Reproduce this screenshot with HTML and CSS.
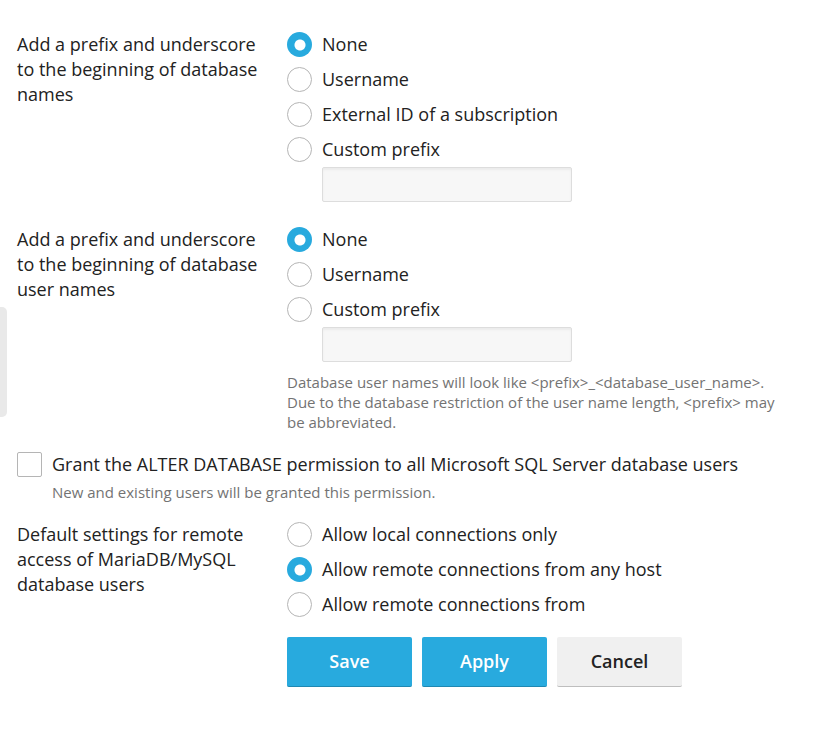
FILE: index.html
```html
<!DOCTYPE html>
<html lang="en">
<head>
<meta charset="utf-8">
<meta name="viewport" content="width=device-width, initial-scale=1">
<title>Database settings</title>
<link rel="stylesheet" href="styles.css">
</head>
<body>
<div class="side-handle"></div>
<form class="form">
  <div class="row" role="radiogroup" aria-labelledby="db-label">
    <div class="row-label" id="db-label">Add a prefix and underscore to the beginning of database names</div>
    <div class="row-field">
      <label class="option"><input type="radio" name="db" checked>None</label>
      <label class="option"><input type="radio" name="db">Username</label>
      <label class="option"><input type="radio" name="db">External ID of a subscription</label>
      <label class="option"><input type="radio" name="db"><span id="db-custom-text">Custom prefix</span></label>
      <input class="text" type="text" aria-labelledby="db-custom-text" disabled>
    </div>
  </div>
  <div class="row" role="radiogroup" aria-labelledby="user-label">
    <div class="row-label" id="user-label">Add a prefix and underscore to the beginning of database user names</div>
    <div class="row-field">
      <label class="option"><input type="radio" name="user" checked>None</label>
      <label class="option"><input type="radio" name="user">Username</label>
      <label class="option"><input type="radio" name="user"><span id="user-custom-text">Custom prefix</span></label>
      <input class="text" type="text" aria-labelledby="user-custom-text" disabled>
      <p class="hint">Database user names will look like &lt;prefix&gt;_&lt;database_user_name&gt;. Due to the database restriction of the user name length, &lt;prefix&gt; may be abbreviated.</p>
    </div>
  </div>
  <div class="grant">
    <label class="option"><input type="checkbox" aria-describedby="grant-hint">Grant the ALTER DATABASE permission to all Microsoft SQL Server database users</label>
    <p class="hint grant-hint" id="grant-hint">New and existing users will be granted this permission.</p>
  </div>
  <div class="row" role="radiogroup" aria-labelledby="remote-label">
    <div class="row-label" id="remote-label">Default settings for remote access of MariaDB/MySQL database users</div>
    <div class="row-field">
      <label class="option"><input type="radio" name="remote">Allow local connections only</label>
      <label class="option"><input type="radio" name="remote" checked>Allow remote connections from any host</label>
      <label class="option"><input type="radio" name="remote">Allow remote connections from</label>
    </div>
  </div>
  <div class="actions">
    <button class="button primary" type="button">Save</button>
    <button class="button primary" type="button">Apply</button>
    <button class="button" type="button">Cancel</button>
  </div>
</form>
</body>
</html>
```
FILE: styles.css
```css
* { box-sizing: border-box; }

body {
  margin: 0;
  background: #fff;
  color: #222;
  font-family: "Open Sans", sans-serif;
  font-size: 18px;
  line-height: 25px;
}

.side-handle {
  position: absolute;
  left: 0;
  top: 307px;
  width: 7px;
  height: 110px;
  border-radius: 0 5px 5px 0;
  background: #e9e9e9;
}

.form {
  display: flex;
  flex-direction: column;
  padding: 32px 30px 32px 17px;
}

.row {
  display: grid;
  grid-template-columns: 250px 1fr;
  column-gap: 20px;
  margin-bottom: 25px;
}

.row-field {
  display: flex;
  flex-direction: column;
  align-items: flex-start;
  gap: 10px;
}

.option {
  display: flex;
  align-items: center;
  gap: 10px;
}

.option input {
  appearance: none;
  flex: none;
  width: 25px;
  height: 25px;
  margin: 0;
  border: 1px solid #b5b5b5;
  border-radius: 2px;
  background: #fff;
}

.option input[type="radio"] { border-radius: 50%; }

.option input[type="radio"]:checked {
  border: 0;
  background: radial-gradient(circle at 13px 13px, #fff 5px, #28aade 6px);
}

.text {
  width: 250px;
  height: 35px;
  margin: -5px 0 0 35px;
  padding: 0 10px;
  border: 1px solid #ddd;
  border-radius: 2px;
  background: #f7f7f7;
  box-shadow: inset 0 2px 2px #ebebeb;
  font: inherit;
}

.hint {
  margin: 0;
  color: #737373;
  font-size: 15px;
  line-height: 20px;
}

.row .hint { margin-bottom: -5px; }

.grant { margin-bottom: 20px; }

.grant-hint { margin: 5px 0 0 35px; }

.actions {
  display: flex;
  gap: 10px;
  margin: -5px 0 0 270px;
}

.button {
  width: 125px;
  height: 50px;
  padding: 0;
  border: 0;
  border-bottom: 1px solid #bebebe;
  border-radius: 2px;
  background: #f0f0f0;
  color: #222;
  font: 600 18px/25px "Open Sans", sans-serif;
}

.button.primary {
  border-bottom-color: #1f88b2;
  background: #28aade;
  color: #fff;
}
```
